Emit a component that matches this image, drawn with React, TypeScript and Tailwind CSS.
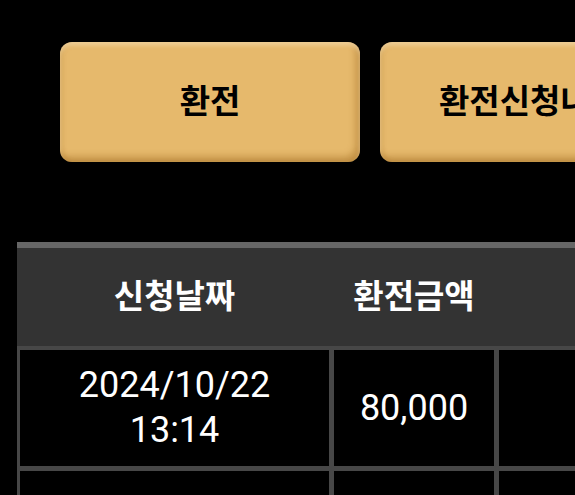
import React from "react";

const font = { fontFamily: '"Roboto", "Noto Sans CJK KR", sans-serif' };

type Row = { date: string; time: string; amount: string; status: string; h: string };

const rows: Row[] = [
  { date: "2024/10/22", time: "13:14", amount: "80,000", status: "승인대기", h: "h-[116px]" },
  { date: "2024/10/21", time: "09:02", amount: "50,000", status: "승인완료", h: "h-[150px]" },
];

function GoldButton({ label }: { label: string }) {
  return (
    <button
      className="w-[300px] h-[120px] shrink-0 rounded-[12px] bg-[#e6b96c] text-black text-[33px] font-bold shadow-[inset_0_3px_4px_rgba(255,240,210,0.5),inset_-4px_-5px_7px_rgba(140,85,10,0.4),inset_3px_0_4px_rgba(140,85,10,0.15),0_2px_3px_rgba(0,0,0,0.6)]"
    >
      {label}
    </button>
  );
}

export default function App() {
  return (
    <div className="w-[575px] h-[495px] overflow-hidden bg-black" style={font}>
      <div className="w-[900px]">
        <div className="flex gap-[20px] pl-[60px] pt-[42px]">
          <GoldButton label="환전" />
          <GoldButton label="환전신청내역" />
        </div>

        {/* history table */}
        <div className="ml-[17px] mt-[80px] w-[800px]">
          <div className="h-[6px] bg-[#666666]" />
          <div className="grid grid-cols-[309px_160px_262px] gap-x-[5px] pl-[3px] h-[98px] bg-[#333333] text-white text-[33px] font-bold">
            <div className="flex items-center justify-center">신청날짜</div>
            <div className="flex items-center justify-center">환전금액</div>
            <div className="flex items-center justify-center">상태</div>
          </div>
          <div className="grid grid-cols-[309px_160px_262px] gap-x-[5px] gap-y-[5px] pl-[3px] pt-[4px] bg-[#474747] text-white text-[36px] leading-[45px]">
            {rows.map((r) => (
              <React.Fragment key={r.date + r.time}>
                <div className={`${r.h} bg-black flex flex-col items-center justify-center`}>
                  <span>{r.date}</span>
                  <span>{r.time}</span>
                </div>
                <div className={`${r.h} bg-black flex items-center justify-center`}>{r.amount}</div>
                <div className={`${r.h} bg-black flex items-center justify-center text-[#3b6cf5] text-[30px]`}>
                  {r.status}
                </div>
              </React.Fragment>
            ))}
          </div>
        </div>
      </div>
    </div>
  );
}
